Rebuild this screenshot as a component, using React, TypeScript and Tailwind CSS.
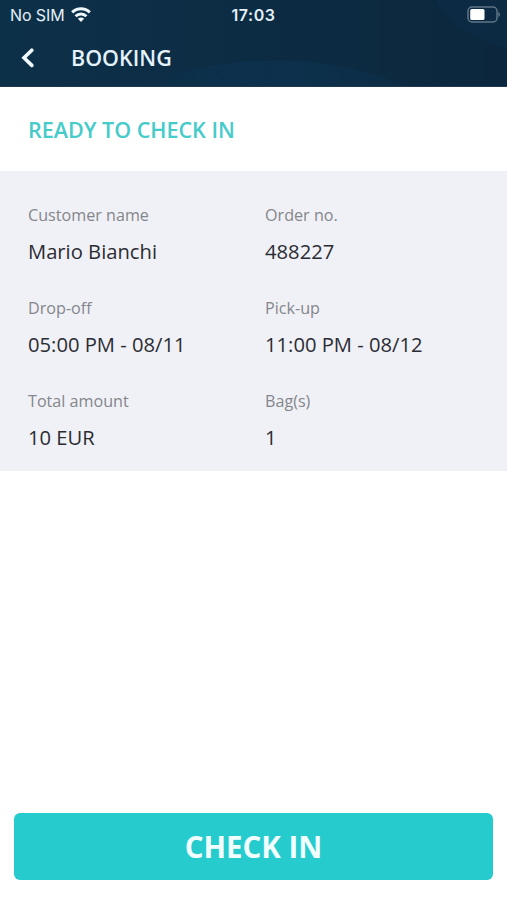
interface BookingField {
  label: string;
  value: string;
}

const fields: BookingField[] = [
  { label: 'Customer name', value: 'Mario Bianchi' },
  { label: 'Order no.', value: '488227' },
  { label: 'Drop-off', value: '05:00 PM - 08/11' },
  { label: 'Pick-up', value: '11:00 PM - 08/12' },
  { label: 'Total amount', value: '10 EUR' },
  { label: 'Bag(s)', value: '1' },
];

function WifiIcon() {
  return (
    <svg width="20" height="15" viewBox="0 0 20 15" fill="none" stroke="#eef7fc" strokeWidth="3">
      <path d="M1.2 5.4a12.4 12.4 0 0 1 17.6 0" />
      <path d="M4.6 9.2a7.6 7.6 0 0 1 10.8 0" />
      <path d="M10 15 6.9 11.8a4.3 4.3 0 0 1 6.2 0Z" fill="#eef7fc" stroke="none" />
    </svg>
  );
}

function BatteryIcon() {
  return (
    <svg width="34" height="17" viewBox="0 0 34 17" fill="none">
      <rect x="1" y="1" width="29" height="15" rx="4" stroke="#5f7687" strokeWidth="1.5" />
      <rect x="3.2" y="3" width="14.3" height="11" rx="1.6" fill="#fff" />
      <path d="M31.3 6v5c1.2-.5 1.7-1.4 1.7-2.5s-.5-2-1.7-2.5Z" fill="#5f7687" />
    </svg>
  );
}

function StatusBar() {
  return (
    <div className="relative grid h-[29px] grid-cols-3 items-center pl-[10px] pr-[6px] font-['Inter',sans-serif] text-[#e4f0f8]">
      <div className="flex items-center gap-[6px]">
        <span className="text-[16px] leading-none tracking-[-0.1px] whitespace-nowrap">No SIM</span>
        <WifiIcon />
      </div>
      <span className="pr-[4px] text-center text-[16px] leading-none font-semibold tracking-[0.5px]">17:03</span>
      <div className="flex justify-end">
        <BatteryIcon />
      </div>
    </div>
  );
}

function Header() {
  return (
    <header className="relative h-[87px] overflow-hidden bg-linear-to-r from-[#0d3049] via-[#0c2c43] to-[#0c273d]">
      <svg className="absolute inset-0" width="507" height="87" viewBox="0 0 507 87">
        <defs>
          <linearGradient id="wave" x1="0" x2="1">
            <stop offset="0" stopColor="#0d3454" stopOpacity="0" />
            <stop offset="0.4" stopColor="#0d3454" stopOpacity="0.6" />
            <stop offset="1" stopColor="#0d3454" stopOpacity="0.35" />
          </linearGradient>
        </defs>
        <path d="M130 87C190 65 250 59 300 61C345 64 380 75 406 87Z" fill="url(#wave)" />
        <path d="M436 0C448 24 475 40 507 48V0Z" fill="#0d3350" opacity="0.3" />
        <path d="M0 86.5H507" stroke="#1f3a50" />
      </svg>
      <StatusBar />
      <div className="relative flex h-[58px] items-center pl-[21px]">
        <svg width="14" height="20" viewBox="0 0 14 20" fill="none">
          <path d="M10.8 2.2 3 9.8l7.8 7.6" stroke="#f2faff" strokeWidth="3.6" strokeLinecap="round" />
        </svg>
        <h1 className="ml-[36px] pb-px text-[21.5px] leading-none font-semibold text-[#e4f2fa]">BOOKING</h1>
      </div>
    </header>
  );
}

export default function App() {
  return (
    <div className="flex h-[900px] w-[507px] flex-col bg-white font-['Open_Sans',sans-serif]">
      <Header />

      <div className="flex h-[84px] items-center px-7 pt-[3px]">
        <h2 className="text-[21.5px] font-semibold text-[#45cbca]">READY TO CHECK IN</h2>
      </div>

      <div className="grid h-[300px] grid-cols-[237px_1fr] auto-rows-[93px] bg-[#f0f1f6] px-7 pt-8">
        {fields.map((field) => (
          <div key={field.label}>
            <div className="text-[16.15px] leading-6 text-[#85868b]">{field.label}</div>
            <div className="mt-[9px] text-[20.2px] leading-[30px] text-[#2b2c33]">{field.value}</div>
          </div>
        ))}
      </div>

      <div className="mt-auto px-[14px] pb-[20px]">
        <button className="h-[67px] w-full rounded-[6px] bg-[#26cbce] pt-[2px] text-[29.5px] font-bold text-[#f2ffff]">
          CHECK IN
        </button>
      </div>
    </div>
  );
}
